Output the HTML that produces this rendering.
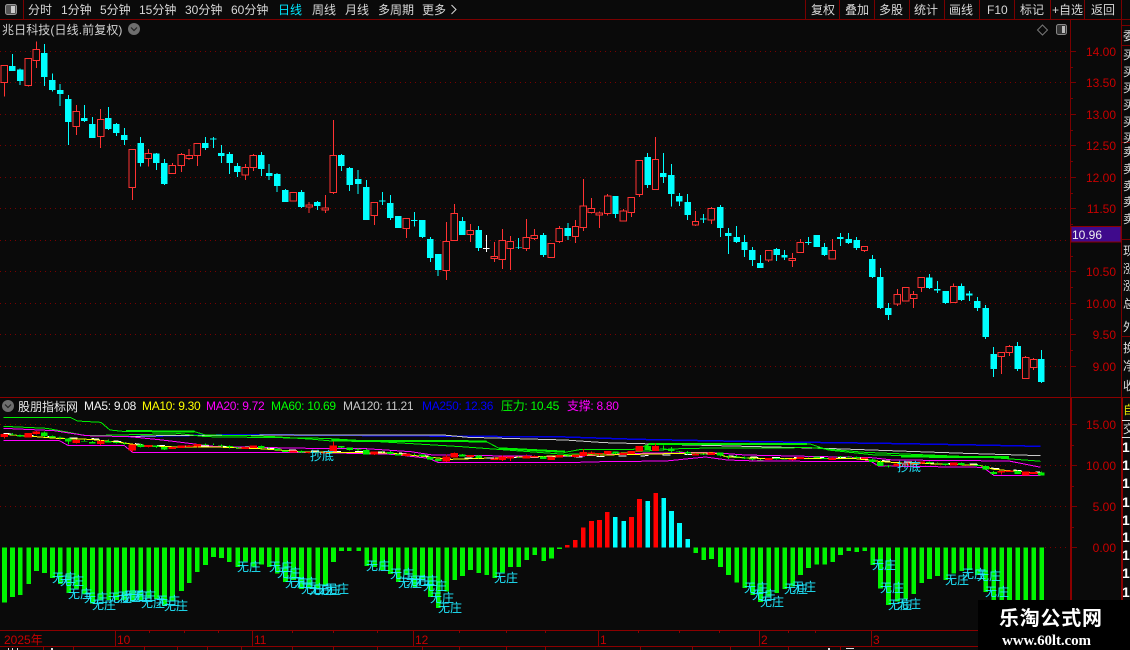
<!DOCTYPE html>
<html><head><meta charset="utf-8"><style>
html,body{margin:0;padding:0;background:#0a0a0a;overflow:hidden}
svg{display:block;font-family:"Liberation Sans","WenQuanYi Zen Hei","Noto Sans CJK SC",sans-serif;font-size:12px}
</style></head><body>
<svg width="1130" height="650" viewBox="0 0 1130 650" xmlns="http://www.w3.org/2000/svg">
<defs>
<clipPath id="strip"><rect x="1123" y="20" width="7" height="580"/></clipPath>
<g id="cw">
<path vector-effect="non-scaling-stroke" fill="none" d="M34 162V213M56 205V255M123 132V258M145 220V275M167 252V318M190 285V435M234 315V366M256 351V414M301 321V390M323 369V408M345 384V435M390 411V500M434 459V510M456 477V555M570 411V450M592 411V444M614 435V489M637 456V522M659 489V531M725 456V528M747 492V540M769 519V576M792 567V606M836 570V624M881 603V630M947 462V513M970 501V573M994 510V582M1017 540V660M1061 576V615M1083 585V660M1172 660V714M1150 636V680M1194 711V786M1216 762V828M1283 651V705M1328 678V753M1439 714V747M1508 699V771"/>
<path transform="translate(1568)" vector-effect="non-scaling-stroke" fill="none" d="M8 669V720M140 588V654M229 459V564M273 459V549M295 492V620M317 579V618M340 582V660M384 642V669M431 615V711M453 684V762M476 678V729M498 705V771M520 741V798M542 765V804M587 744V783M609 750V780M675 711V735M720 729V768M764 699V738M787 699V732M809 711V750M853 765V834M875 804V927M897 909V960M1011 822V867M1033 843V879M1056 873V912M1100 850V903M1122 873V903M1144 891V933M1167 915V1017M1189 1041V1131M1256 1026V1113M1322 1050V1149"/>
</g>
<g id="cb">
<path d="M25 198h18V213h-18zM47 208h18V243h-18zM114 159h18V231h-18zM136 240h18V270h-18zM158 270h18V282h-18zM181 297h18V366h-18zM225 354h18V363h-18zM247 372h18V414h-18zM292 354h18V387h-18zM314 372h18V399h-18zM336 405h18V420h-18zM381 429h18V489h-18zM425 460h18V489h-18zM447 489h18V552h-18zM561 429h18V444h-18zM583 416h18V418h-18zM605 459h18V468h-18zM628 462h18V489h-18zM650 498h18V516h-18zM716 465h18V507h-18zM738 519h18V528h-18zM760 522h18V558h-18zM783 570h18V606h-18zM827 576h18V621h-18zM872 606h18V618h-18zM938 465h18V498h-18zM961 504h18V555h-18zM985 537h18V552h-18zM1008 561h18V660h-18zM1052 602h18V605h-18zM1074 609h18V654h-18zM1096 648h18V684h-18zM1141 660h18V663h-18zM1163 660h18V711h-18zM1185 717h18V774h-18zM1207 762h18V810h-18zM1274 663h18V705h-18zM1319 690h18V744h-18zM1430 742h18V744h-18zM1499 705h18V765h-18z"/>
<path transform="translate(1568)" d="M-1 684h18V708h-18zM131 588h18V642h-18zM220 471h18V555h-18zM264 519h18V531h-18zM286 525h18V582h-18zM308 588h18V605h-18zM331 606h18V645h-18zM375 656h18V658h-18zM422 621h18V684h-18zM444 699h18V708h-18zM467 711h18V726h-18zM489 726h18V750h-18zM511 750h18V780h-18zM533 789h18V804h-18zM578 747h18V765h-18zM600 765h18V772h-18zM666 726h18V729h-18zM689 705h18V741h-18zM711 741h18V765h-18zM755 711h18V717h-18zM778 717h18V729h-18zM800 720h18V744h-18zM844 777h18V831h-18zM866 831h18V924h-18zM888 924h18V945h-18zM1002 832h18V864h-18zM1024 867h18V871h-18zM1047 873h18V909h-18zM1091 858h18V900h-18zM1113 880h18V886h-18zM1135 903h18V924h-18zM1158 924h18V1011h-18zM1180 1062h18V1107h-18zM1247 1038h18V1107h-18zM1313 1077h18V1146h-18z"/>
</g>
<g id="rw">
<path vector-effect="non-scaling-stroke" fill="none" d="M12 196V290M79 175V260M101 124V204M212 315V405M279 327V444M367 448V600M412 447V500M478 489V522M503 459V516M525 447V480M548 429V498M681 492V540M703 462V513M814 576V603M858 606V639M903 585V639M925 360V582M1039 607V675M1128 655V714M1239 666V840M1261 612V722M1305 672V726M1372 726V786M1394 687V807M1416 708V810M1461 657V753M1483 687V720M1552 678V729"/>
<path transform="translate(1568)" vector-effect="non-scaling-stroke" fill="none" d="M29 660V729M51 537V693M73 594V640M95 635V684M118 582V647M162 627V663M184 592V651M206 481V591M251 411V569M362 633V678M406 621V672M565 751V786M631 759V801M653 717V759M742 717V777M831 739V756M922 867V918M945 862V903M967 873V924M989 832V876M1078 850V908M1211 1057V1122M1233 1035V1068M1278 1068V1136M1300 1074V1110"/>
</g>
<g id="rb">
<path vector-effect="non-scaling-stroke" d="M3 196h18V248h-18zM70 175h18V257h-18zM92 148h18V182h-18zM203 334h18V380h-18zM270 358h18V410h-18zM358 448h18V563h-18zM403 460h18V476h-18zM469 496h18V521h-18zM494 463h18V497h-18zM516 466h18V476h-18zM539 430h18V467h-18zM672 502h18V525h-18zM694 466h18V503h-18zM805 577h18V603h-18zM849 615h18V621h-18zM894 624h18V630h-18zM916 466h18V578h-18zM1030 607h18V647h-18zM1119 655h18V686h-18zM1230 724h18V812h-18zM1252 640h18V722h-18zM1296 691h18V704h-18zM1363 769h18V776h-18zM1385 721h18V779h-18zM1407 724h18V746h-18zM1452 712h18V746h-18zM1474 706h18V716h-18zM1521 730h18V773h-18zM1543 685h18V725h-18z"/>
<path transform="translate(1568)" vector-effect="non-scaling-stroke" d="M20 679h18V710h-18zM42 618h18V683h-18zM64 625h18V638h-18zM86 639h18V645h-18zM109 588h18V641h-18zM153 633h18V663h-18zM175 592h18V638h-18zM197 481h18V584h-18zM242 478h18V569h-18zM353 664h18V675h-18zM397 625h18V660h-18zM556 751h18V780h-18zM622 775h18V782h-18zM644 727h18V758h-18zM733 751h18V777h-18zM822 739h18V752h-18zM913 883h18V912h-18zM936 862h18V903h-18zM958 883h18V896h-18zM980 832h18V862h-18zM1069 859h18V908h-18zM1202 1057h18V1070h-18zM1224 1039h18V1058h-18zM1269 1072h18V1136h-18zM1291 1078h18V1103h-18z"/>
</g>
</defs>

<rect width="1130" height="650" fill="#0a0a0a"/>

<!-- grid -->
<path fill="none" stroke="#7a0000" stroke-dasharray="1 4" d="M0 51.5H1070M0 82.5H1070M0 114.5H1070M0 145.5H1070M0 177.5H1070M0 208.5H1070M0 240.5H1070M0 271.5H1070M0 303.5H1070M0 334.5H1070M0 366.5H1070M0 424.5H1070M0 465.5H1070M0 506.5H1070M1045 547.5H1070"/>

<!-- frame -->
<path fill="none" stroke="#7a0000" d="M0 19.5H1130M23.5 0V19M805.5 0V19M839.5 0V19M874.5 0V19M909.5 0V19M944.5 0V19M979.5 0V19M1014.5 0V19M1050.5 0V19M1084.5 0V19M1121.5 0V19"/>
<path fill="none" stroke="#7a0000" d="M1070.5 19V397M1121.5 19V397M1121 25.5H1130M1121 45.5H1130M1121 142.5H1130M1121 239.5H1130M1121 336.5H1130"/>
<path fill="none" stroke="#8b0000" d="M0 397.5H1130"/>
<path fill="none" stroke="#8b0000" stroke-width="2" d="M1071 397V630M1122 397V630"/>
<path fill="none" stroke="#7a0000" d="M1071 51.5h5M1071 82.5h5M1071 114.5h5M1071 145.5h5M1071 177.5h5M1071 208.5h5M1071 240.5h5M1071 271.5h5M1071 303.5h5M1071 334.5h5M1071 366.5h5M1071 67.5h2M1071 98.5h2M1071 130.5h2M1071 161.5h2M1071 193.5h2M1071 224.5h2M1071 256.5h2M1071 287.5h2M1071 319.5h2M1071 350.5h2M1072 424.5h5M1072 465.5h5M1072 506.5h5M1072 547.5h5M1072 445.5h2M1072 486.5h2M1072 527.5h2"/>

<!-- top bar -->
<g fill="#d8d8d8">
<text x="28" y="14">分时</text><text x="61" y="14">1分钟</text><text x="100" y="14">5分钟</text><text x="139" y="14">15分钟</text><text x="185" y="14">30分钟</text><text x="231" y="14">60分钟</text>
<text x="278" y="14" fill="#00e8ff">日线</text><text x="312" y="14">周线</text><text x="345" y="14">月线</text><text x="378" y="14">多周期</text><text x="422" y="14">更多</text>
<path d="M451.5 5l4.500 4.500-4.500 4.500" fill="none" stroke="#d8d8d8"/>
<text x="811" y="14">复权</text><text x="845" y="14">叠加</text><text x="879" y="14">多股</text><text x="914" y="14">统计</text><text x="949" y="14">画线</text><text x="987" y="14">F10</text><text x="1020" y="14">标记</text><text x="1052" y="14">+自选</text><text x="1091" y="14">返回</text>
</g>
<rect x="5.500" y="4.500" width="11" height="10" rx="2" fill="#555" stroke="#999"/><rect x="11" y="6" width="4" height="7" fill="#ccc"/>

<!-- title -->
<text x="2" y="34" fill="#d0d0d0" letter-spacing=".1">兆日科技(日线.前复权)</text>
<circle cx="134" cy="29" r="6" fill="#6e6e6e"/><path d="M131 27.500l3 3 3-3" fill="none" stroke="#222" stroke-width="1.200"/>
<path d="M1042.500 25l5 5-5 5-5-5z" fill="none" stroke="#777"/>
<rect x="1056.500" y="24.500" width="10" height="10" rx="2" fill="#333" stroke="#888"/><rect x="1062" y="26" width="3" height="7" fill="#bbb"/>

<!-- axis labels -->
<g fill="#c80000" text-anchor="end">
<text x="1116" y="56">14.00</text><text x="1116" y="87">13.50</text><text x="1116" y="119">13.00</text><text x="1116" y="150">12.50</text><text x="1116" y="182">12.00</text><text x="1116" y="213">11.50</text><text x="1116" y="276">10.50</text><text x="1116" y="308">10.00</text><text x="1116" y="339">9.50</text><text x="1116" y="371">9.00</text>
<text x="1116" y="429">15.00</text><text x="1116" y="470">10.00</text><text x="1116" y="511">5.00</text><text x="1116" y="552">0.00</text>
</g>
<rect x="1071" y="226.500" width="50" height="15.500" fill="#3f0a8c" stroke="#8b0000"/>
<text x="1072" y="239" fill="#f0f0f0">10.96</text>

<!-- right strip -->
<g clip-path="url(#strip)" fill="#dcdcdc">
<text x="1123" y="40">委</text><text x="1123" y="59">买</text><text x="1123" y="76">买</text><text x="1123" y="92">买</text><text x="1123" y="109">买</text><text x="1123" y="126">买</text><text x="1123" y="142">买</text><text x="1123" y="156">卖</text><text x="1123" y="173">卖</text><text x="1123" y="190">卖</text><text x="1123" y="206">卖</text><text x="1123" y="223">卖</text>
<text x="1123" y="255">现</text><text x="1123" y="273">涨</text><text x="1123" y="290">涨</text><text x="1123" y="308">总</text><text x="1123" y="331">外</text><text x="1123" y="352">换</text><text x="1123" y="370">净</text><text x="1123" y="390">收</text>
<text x="1123" y="414" fill="#e0e000">自</text><text x="1123" y="433">交</text>
<g font-weight="bold" font-size="14" fill="#fff"><text x="1122" y="452">1</text><text x="1122" y="470">1</text><text x="1122" y="488">1</text><text x="1122" y="507">1</text><text x="1122" y="525">1</text><text x="1122" y="542">1</text><text x="1122" y="560">1</text><text x="1122" y="578">1</text><text x="1122" y="597">1</text></g>
</g>
<path fill="none" stroke="#e0e0e0" d="M1122 420.500H1130M1122 437.500H1130"/>

<!-- main candles -->
<g transform="scale(.36036,.33333)" shape-rendering="crispEdges">
<use href="#cw" stroke="#00ffff"/><use href="#rw" stroke="#ff3232"/>
<use href="#rb" fill="#0a0a0a" stroke="#ff3232"/><use href="#cb" fill="#00ffff"/>
<path vector-effect="non-scaling-stroke" stroke="#fff" fill="none" d="M1350 705V756M1341 745H1359"/>
</g>

<!-- lower panel header -->
<circle cx="8" cy="406" r="6" fill="#6e6e6e"/><path d="M5 404.500l3 3 3-3" fill="none" stroke="#222" stroke-width="1.200"/>
<text x="18" y="411" fill="#e8e8e8">股朋指标网</text>
<g letter-spacing="-.3">
<text x="84" y="410" fill="#f0f0f0">MA5: 9.08</text>
<text x="142" y="410" fill="#ffff00">MA10: 9.30</text>
<text x="206" y="410" fill="#ff00ff">MA20: 9.72</text>
<text x="271" y="410" fill="#00ff00">MA60: 10.69</text>
<text x="343" y="410" fill="#c8c8c8">MA120: 11.21</text>
<text x="422" y="410" fill="#0000ff">MA250: 12.36</text>
<text x="501" y="410" fill="#00ff00">压力: 10.45</text>
<text x="567" y="410" fill="#ff00ff">支撑: 8.80</text>
</g>

<!-- MA lines -->
<g transform="translate(0,395) scale(.36036,.33333)" fill="none" shape-rendering="crispEdges">
<path vector-effect="non-scaling-stroke" stroke="#0000e6" stroke-width="1.500" d="M355 125L600 120L690 119L1568 126L1768 133L2103 140L2448 145L2708 150L2888 154"/>
<path vector-effect="non-scaling-stroke" stroke="#c8c8c8" d="M355 125L440 122L890 120L1230 120L1300 127L1568 135L1678 143L1918 150L2288 160L2678 175L2888 182"/>
<path vector-effect="non-scaling-stroke" stroke="#00ee00" d="M10 67L195 67L215 78L280 82L305 105L350 110L540 110L570 120L690 122L760 125L870 133L920 138L1350 140L1385 160L1450 165L1568 172L1613 163L1758 163L1808 147L2248 147L2298 165L2428 180L2718 185L2868 197L2888 199"/>
<path vector-effect="non-scaling-stroke" stroke="#00ee00" stroke-width="2" d="M350 108L540 110M920 137L1350 139M1385 160L1568 170M1800 147L2240 147M2500 185L2800 186"/>
<path vector-effect="non-scaling-stroke" stroke="#00ee00" d="M10 94L130 100L240 122L500 116L570 125L900 130L1280 155L1568 178L1700 175L1900 160L2250 158L2400 172L2800 190"/>
<path vector-effect="non-scaling-stroke" stroke="#ff00ff" d="M10 100L150 107L240 122L360 125L450 135L600 155L860 160L1000 160L1140 170L1200 180L1568 185L1768 175L1968 172L2068 180L2418 188L2478 195L2800 198L2888 217"/>
<path vector-effect="non-scaling-stroke" stroke="#ff00ff" d="M10 137L165 137L190 152L345 152L368 172L855 172L1010 176L1090 178L1190 190L1215 202L1568 203L1673 200L1848 198L1958 186L2018 195L2098 198L2418 200L2438 213L2728 217L2758 241L2888 241"/>
<path vector-effect="non-scaling-stroke" stroke="#ffff00" d="M10 118L100 125L170 131L250 133L340 143L400 153L500 156L600 156L720 161L850 171L1000 173L1090 175L1180 185L1250 193L1568 182L1768 178L1978 173L2018 186L2128 191L2368 190L2428 198L2488 203L2718 211L2758 223L2888 235"/>
<path vector-effect="non-scaling-stroke" stroke="#ffffff" stroke-dasharray="8 14" d="M10 115L100 122L170 128L250 130L340 140L400 150L500 153L600 153L720 158L850 168L1000 170L1090 172L1180 182L1250 190L1568 186L1768 183L1978 176L2018 183L2128 188L2368 187L2428 195L2488 200L2718 208L2758 220L2888 232"/>
</g>
<!-- mini candles -->
<g transform="translate(0,425.800) scale(.36036,.04333)" shape-rendering="crispEdges">
<use href="#cw" stroke="#00ee00"/><use href="#rw" stroke="#ff0000"/>
<use href="#cb" fill="#00ee00"/><use href="#rb" fill="#ff0000" stroke="#ff0000"/>
</g>

<!-- bars -->
<g transform="translate(0,525) scale(.36036,.33333)" shape-rendering="crispEdges">
<path fill="#00f500" d="M6 67h13V233h-13zM28 67h13V216h-13zM50 67h13V210h-13zM73 67h13V177h-13zM95 67h13V138h-13zM117 67h13V144h-13zM139 67h13V159h-13zM161 67h13V177h-13zM184 67h13V204h-13zM206 67h13V190h-13zM228 67h13V207h-13zM250 67h13V236h-13zM273 67h13V225h-13zM295 67h13V225h-13zM317 67h13V225h-13zM339 67h13V225h-13zM361 67h13V230h-13zM384 67h13V225h-13zM406 67h13V220h-13zM428 67h13V222h-13zM450 67h13V243h-13zM472 67h13V230h-13zM497 67h13V198h-13zM519 67h13V174h-13zM541 67h13V141h-13zM564 67h13V120h-13zM586 67h13V96h-13zM608 67h13V99h-13zM630 67h13V111h-13zM653 67h13V126h-13zM675 67h13V110h-13zM697 67h13V125h-13zM719 67h13V118h-13zM741 67h13V126h-13zM763 67h13V145h-13zM786 67h13V171h-13zM808 67h13V165h-13zM830 67h13V192h-13zM852 67h13V190h-13zM875 67h13V190h-13zM897 67h13V180h-13zM919 67h13V111h-13zM941 67h13V78h-13zM963 67h13V78h-13zM989 67h13V78h-13zM1011 67h13V123h-13zM1033 67h13V126h-13zM1055 67h13V135h-13zM1077 67h13V147h-13zM1099 67h13V171h-13zM1122 67h13V150h-13zM1144 67h13V186h-13zM1166 67h13V165h-13zM1188 67h13V216h-13zM1210 67h13V249h-13zM1233 67h13V200h-13zM1255 67h13V165h-13zM1277 67h13V153h-13zM1299 67h13V135h-13zM1322 67h13V144h-13zM1344 67h13V150h-13zM1366 67h13V159h-13zM1388 67h13V142h-13zM1410 67h13V126h-13zM1433 67h13V126h-13zM1455 67h13V105h-13zM1477 67h13V90h-13zM1502 67h13V108h-13zM1524 67h13V100h-13zM1546 67h13V72h-13z"/>
<path transform="translate(1568)" fill="#00f500" d="M356 67h13V84h-13zM378 67h13V105h-13zM400 67h13V102h-13zM425 67h13V126h-13zM447 67h13V150h-13zM470 67h13V172h-13zM492 67h13V189h-13zM514 67h13V210h-13zM536 67h13V231h-13zM559 67h13V214h-13zM581 67h13V204h-13zM603 67h13V192h-13zM625 67h13V185h-13zM647 67h13V150h-13zM669 67h13V129h-13zM692 67h13V118h-13zM714 67h13V118h-13zM736 67h13V111h-13zM758 67h13V90h-13zM781 67h13V78h-13zM803 67h13V81h-13zM825 67h13V78h-13zM847 67h13V120h-13zM869 67h13V190h-13zM891 67h13V240h-13zM916 67h13V230h-13zM939 67h13V222h-13zM961 67h13V207h-13zM983 67h13V174h-13zM1005 67h13V162h-13zM1027 67h13V153h-13zM1050 67h13V165h-13zM1072 67h13V146h-13zM1094 67h13V138h-13zM1116 67h13V135h-13zM1138 67h13V150h-13zM1161 67h13V201h-13zM1183 67h13V240h-13zM1205 67h13V240h-13zM1227 67h13V240h-13zM1250 67h13V240h-13zM1272 67h13V240h-13zM1294 67h13V240h-13zM1316 67h13V240h-13z"/>
<path transform="translate(1568)" fill="#ff0000" d="M0 60h13V67h-13zM22 45h13V67h-13zM44 7h13V67h-13zM67 -12h13V67h-13zM89 -15h13V67h-13zM111 -39h13V67h-13zM178 -24h13V67h-13zM200 -78h13V67h-13zM245 -96h13V67h-13z"/>
<path transform="translate(1568)" fill="#00ffff" d="M133 -24h13V67h-13zM156 -12h13V67h-13zM223 -72h13V67h-13zM267 -81h13V67h-13zM289 -42h13V67h-13zM311 -6h13V67h-13zM334 42h13V67h-13z"/>
</g>

<!-- labels -->
<g fill="#1fe8ff">
<text x="310" y="460">抄底</text><text x="897" y="471">抄底</text>
<text x="52" y="582">无庄</text><text x="60" y="585">无庄</text><text x="68" y="598">无庄</text><text x="84" y="602">无庄</text><text x="92" y="609">无庄</text><text x="108" y="602">无庄</text><text x="117" y="601">无庄</text><text x="124" y="600">无庄</text><text x="132" y="600">无庄</text><text x="141" y="607">无庄</text><text x="156" y="605">无庄</text><text x="164" y="610">无庄</text>
<text x="237" y="571">无庄</text><text x="269" y="571">无庄</text><text x="277" y="577">无庄</text><text x="285" y="587">无庄</text><text x="293" y="587">无庄</text><text x="301" y="593">无庄</text><text x="309" y="594">无庄</text><text x="317" y="594">无庄</text><text x="325" y="593">无庄</text>
<text x="366" y="570">无庄</text><text x="390" y="578">无庄</text><text x="398" y="587">无庄</text><text x="406" y="585">无庄</text><text x="414" y="585">无庄</text><text x="423" y="590">无庄</text><text x="430" y="602">无庄</text><text x="438" y="612">无庄</text><text x="494" y="582">无庄</text>
<text x="744" y="592">无庄</text><text x="752" y="599">无庄</text><text x="760" y="606">无庄</text><text x="784" y="593">无庄</text><text x="792" y="591">无庄</text>
<text x="872" y="569">无庄</text><text x="880" y="592">无庄</text><text x="888" y="609">无庄</text><text x="897" y="608">无庄</text><text x="945" y="584">无庄</text><text x="962" y="578">无庄</text><text x="977" y="580">无庄</text><text x="985" y="596">无庄</text>
</g>

<!-- date axis -->
<path fill="none" stroke="#8b0000" d="M0 630.500H1121M0 646.500H1130M115.500 630V646M252.500 630V646M413.500 630V646M598.500 630V646M759.500 630V646M871.500 630V646M149.500 630v3M184.500 630v3M218.500 630v3M292.500 630v3M333.500 630v3M377.500 630v3M459.500 630v3M506.500 630v3M545.500 630v3M638.500 630v3M679.500 630v3M719.500 630v3M788.500 630v3M815.500 630v3M43.500 646v4M73.500 646v4M144.500 646v4M177.500 646v4M207.500 646v4M241.500 646v4M292.500 646v4M333.500 646v4M377.500 646v4M422.500 646v4M459.500 646v4M506.500 646v4M545.500 646v4M640.500 646v4M692.500 646v4M730.500 646v4M788.500 646v4M840.500 646v4"/>
<g fill="#c80000"><text x="4" y="644">2025年</text><text x="117" y="644">10</text><text x="254" y="644">11</text><text x="415" y="644">12</text><text x="600" y="644">1</text><text x="761" y="644">2</text><text x="873" y="644">3</text></g>
<path fill="#e0e0e0" d="M8 648h1v2h-1zM12 648h1v2h-1zM17 648h1v2h-1zM51 648h2v2h-2zM828 648h2v2h-2zM846 648h8v1h-8z"/>

<!-- watermark -->
<rect x="978" y="600" width="152" height="50" fill="#000"/>
<text x="999" y="625" fill="#fff" font-size="20" font-weight="bold" style="font-family:'Noto Sans CJK SC',sans-serif" textLength="103">乐淘公式网</text>
<text x="1002" y="645" fill="#fff" font-size="15" font-weight="bold" style="font-family:'Liberation Serif',serif" textLength="89">www.60lt.com</text>
</svg>
</body></html>
